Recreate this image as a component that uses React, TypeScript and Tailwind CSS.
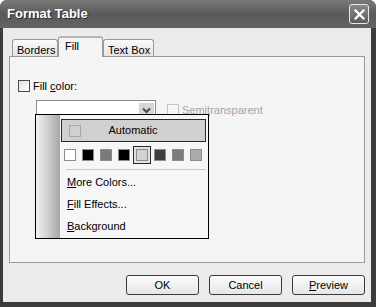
import React from "react";

const swatches = ["#ffffff", "#000000", "#7a7a7a", "#000000", "#d2d2d2", "#3e3e3e", "#7c7c7c", "#ababab"];

const Button = ({ children }: { children: React.ReactNode }) => (
  <button className="w-[73px] h-[20px] rounded-[3px] border border-[#3a3a3a] bg-gradient-to-b from-[#fbfbfb] to-[#e6e6e6] text-[11px] text-black flex items-center justify-center">
    {children}
  </button>
);

export default function App() {
  return (
    <div className="w-[376px] h-[307px] bg-white font-['Liberation_Sans',Arial,sans-serif]">
      <div className="w-[376px] h-[307px] rounded-t-[7px] bg-[#3c3c3c] flex flex-col overflow-hidden">
        {/* title bar */}
        <div className="h-[28px] shrink-0 flex items-center justify-between pl-[7px] pr-[7px] bg-gradient-to-b from-[#7a7a7a] via-[#5a5a5a] to-[#646464]">
          <span className="text-[13px] font-bold text-white [text-shadow:1px_1px_0_#2a2a2a]">Format Table</span>
          <div className="w-[20px] h-[20px] rounded-[3px] border border-[#e8e8e8] bg-gradient-to-b from-[#8a8a8a] to-[#5c5c5c] flex items-center justify-center">
            <svg width="11" height="11" viewBox="0 0 11 11">
              <path d="M1.5 1.5 L9.5 9.5 M9.5 1.5 L1.5 9.5" stroke="white" strokeWidth="2.2" strokeLinecap="square" />
            </svg>
          </div>
        </div>

        {/* client area */}
        <div className="flex-1 ml-[3px] mr-[5px] mb-[5px] bg-[#ebebeb] flex flex-col px-[6px] pt-[8px] text-[11px] text-black">
          {/* tabs */}
          <div className="flex items-end pl-[3px] h-[20px]">
            <div className="w-[46px] h-[17px] border border-b-0 border-[#9a9a9a] rounded-t-[3px] bg-gradient-to-b from-[#fafafa] to-[#e4e4e4] pl-[4px] pt-[2px]">
              Borders
            </div>
            <div className="w-[45px] h-[21px] -mb-px border border-b-0 border-[#9a9a9a] rounded-t-[3px] bg-[#f4f4f4] pl-[6px] relative z-10 border-t-2 border-t-[#b5b5b5]">
              Fill
            </div>
            <div className="w-[51px] h-[17px] border border-b-0 border-[#9a9a9a] rounded-t-[3px] bg-gradient-to-b from-[#fafafa] to-[#e4e4e4] pl-[4px] pt-[2px]">
              Text Box
            </div>
          </div>

          {/* panel */}
          <div className="relative h-[207px] border border-[#9a9a9a] bg-[#f4f4f4] pt-[21px] pl-[8px]">
            <div className="flex items-center gap-[3px]">
              <div className="w-[12px] h-[12px] border border-[#4a4a4a] bg-gradient-to-br from-[#e0e0e0] to-white" />
              <span>
                Fill <u>c</u>olor:
              </span>
            </div>

            <div className="flex items-center mt-[5px] ml-[18px]">
              <div className="w-[120px] h-[21px] border border-[#8a8a8a] bg-white flex items-center justify-end pr-[1px]">
                <div className="w-[15px] h-[15px] bg-[#d6d6d6] flex items-center justify-center">
                  <svg width="9" height="7" viewBox="0 0 9 7">
                    <path d="M1 1.5 L4.5 5 L8 1.5" stroke="#4a4a4a" strokeWidth="2" fill="none" />
                  </svg>
                </div>
              </div>
              <div className="ml-[11px] flex items-center gap-[3px] text-[#a3a3a3]">
                <div className="w-[12px] h-[13px] border border-[#c4c4c4] bg-[#f7f7f7]" />
                <span>
                  Semi<u>t</u>ransparent
                </span>
              </div>
            </div>

            {/* dropdown popup */}
            <div className="absolute left-[25px] top-[57px] w-[174px] h-[125px] border border-black bg-[#f6f6f6] flex">
              <div className="w-[24px] h-full bg-gradient-to-r from-[#f2f2f2] via-[#cfcfcf] to-[#a6a6a6]" />
              <div className="flex-1 flex flex-col pl-[1px] pr-[2px] pt-[4px]">
                <div className="h-[23px] border border-[#2a2a2a] bg-[#d0d0d0] flex items-center pl-[7px]">
                  <div className="w-[12px] h-[12px] border border-[#a8a8a8]" />
                  <span className="flex-1 text-center pr-[20px]">Automatic</span>
                </div>
                <div className="flex mt-[4px] h-[18px]">
                  {swatches.map((c, i) => (
                    <div
                      key={i}
                      className={
                        i === 4
                          ? "w-[18px] h-[18px] border border-[#2a2a2a] bg-[#e2e2e2] flex items-center justify-center"
                          : "w-[18px] h-[18px] flex items-center justify-center"
                      }
                    >
                      <div className="w-[12px] h-[12px] border border-[#8c8c8c]" style={{ background: c }} />
                    </div>
                  ))}
                </div>
                <div className="ml-[5px] mt-[5px] h-px bg-[#c6c6c6]" />
                <div className="flex flex-col pl-[6px]">
                  <div className="h-[22px] flex items-center mt-[1px]">
                    <span><u>M</u>ore Colors...</span>
                  </div>
                  <div className="h-[22px] flex items-center">
                    <span><u>F</u>ill Effects...</span>
                  </div>
                  <div className="h-[22px] flex items-center">
                    <span><u>B</u>ackground</span>
                  </div>
                </div>
              </div>
            </div>
          </div>

          {/* buttons */}
          <div className="flex justify-end gap-[10px] mt-[12px]">
            <Button>OK</Button>
            <Button>Cancel</Button>
            <Button>
              <span><u>P</u>review</span>
            </Button>
          </div>
        </div>
      </div>
    </div>
  );
}
